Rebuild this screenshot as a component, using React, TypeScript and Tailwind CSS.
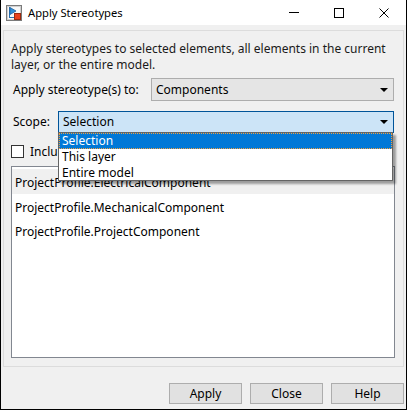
import React from "react";

const font = { fontFamily: '"Noto Sans", "Open Sans", sans-serif' };

function AppIcon() {
  return (
    <svg width="16" height="16" viewBox="0 0 16 16" className="block">
      <rect x="0.5" y="0.5" width="15" height="15" fill="#e8e8e8" stroke="#7a7a7a" />
      <rect x="1.5" y="1.5" width="13" height="13" fill="#f8f8f8" stroke="#d0d0d0" />
      <line x1="3.5" y1="2" x2="3.5" y2="13" stroke="#2a6fb0" />
      <polygon points="4,2.5 10,6 4,9.5" fill="#2f8fd8" stroke="#1e5f9e" strokeWidth="0.8" />
      <line x1="3.5" y1="12.5" x2="8" y2="12.5" stroke="#2a6fb0" />
      <rect x="8.5" y="8.5" width="6" height="6" fill="#e8401c" stroke="#9a2a10" />
    </svg>
  );
}

function Arrow() {
  return (
    <svg width="8" height="4" viewBox="0 0 8 4" className="block">
      <polygon points="0,0 8,0 4,4" fill="#000" />
    </svg>
  );
}

export default function App() {
  return (
    <div
      className="relative w-[407px] h-[410px] bg-[#f0f0f0] border-l border-r border-b border-black flex flex-col text-[12px] text-black overflow-hidden"
      style={font}
    >
      {/* Title bar */}
      <div className="h-[25px] bg-white flex items-center shrink-0">
        <div className="ml-[5px]">
          <AppIcon />
        </div>
        <div className="ml-[6px] text-[11.2px] leading-none">Apply Stereotypes</div>
        <div className="flex-1" />
        <div className="w-[45px] h-[25px] flex items-center justify-center">
          <div className="w-[10px] h-px bg-black" />
        </div>
        <div className="w-[45px] h-[25px] flex items-center justify-center">
          <div className="w-[10px] h-[10px] border border-black" />
        </div>
        <div className="w-[45px] h-[25px] flex items-center justify-center">
          <svg width="10" height="10" viewBox="0 0 10 10">
            <line x1="0.5" y1="0.5" x2="9.5" y2="9.5" stroke="#000" strokeWidth="1" />
            <line x1="9.5" y1="0.5" x2="0.5" y2="9.5" stroke="#000" strokeWidth="1" />
          </svg>
        </div>
      </div>

      {/* Panel */}
      <div className="mt-[5px] ml-[2px] mr-[2px] h-[337px] border border-[#dcdcdc] flex flex-col pl-[7px] pr-[7px] pt-[10px] shrink-0">
        <div className="leading-[16px] text-[#1a1a1a]">
          Apply stereotypes to selected elements, all elements in the current
          <br />
          layer, or the entire model.
        </div>

        <div className="mt-[5px] flex items-center h-[23px]">
          <div className="pl-[2px] w-[140px] shrink-0">Apply stereotype(s) to:</div>
          <div className="flex-1 h-[23px] bg-[#e5e5e5] border border-[#adadad] flex items-center pl-[4px] pr-[5px] mr-[2px]">
            <div className="flex-1">Components</div>
            <Arrow />
          </div>
        </div>

        <div className="mt-[10px] flex items-center h-[22px]">
          <div className="pl-[2px] w-[47px] shrink-0">Scope:</div>
          <div className="flex-1 h-[22px] bg-[#cce4f7] border border-[#005499] flex items-center pl-[4px] pr-[5px] mr-[2px]">
            <div className="flex-1">Selection</div>
            <Arrow />
          </div>
        </div>

        <div className="mt-[12px] flex items-center h-[13px]">
          <div className="w-[13px] h-[13px] border border-[#333] bg-white" />
          <div className="ml-[6px]">Include referenced models</div>
        </div>

        <div className="mt-[8px] h-[192px] mr-[1px] border border-[#828790] bg-white flex flex-col pt-[2px]">
          <div className="h-[25px] bg-[#f0f0f0] flex items-center pl-[3px] pt-[3px]">ProjectProfile.ElectricalComponent</div>
          <div className="h-[24px] flex items-center pl-[3px] pt-[3px]">ProjectProfile.MechanicalComponent</div>
          <div className="h-[24px] flex items-center pl-[3px] pt-[3px]">ProjectProfile.ProjectComponent</div>
        </div>
      </div>

      {/* Buttons */}
      <div className="mt-[16px] flex justify-end gap-[8px] pr-[2px]">
        <div className="w-[73px] h-[21px] bg-[#e1e1e1] border border-[#adadad] flex items-center justify-center">Apply</div>
        <div className="w-[73px] h-[21px] bg-[#e1e1e1] border border-[#adadad] flex items-center justify-center">Close</div>
        <div className="w-[73px] h-[21px] bg-[#e1e1e1] border border-[#adadad] flex items-center justify-center">Help</div>
      </div>

      {/* Dropdown list overlay */}
      <div className="absolute left-[57px] top-[132px] w-[335px] h-[49px] bg-white border border-[#646464] shadow-[3px_3px_2px_rgba(0,0,0,0.35)] flex flex-col">
        <div className="h-[16px] bg-[#0078d7] text-white flex items-center pl-[3px] outline-1 outline-dotted outline-[#f0a040] -outline-offset-1">
          Selection
        </div>
        <div className="h-[16px] flex items-center pl-[3px]">This layer</div>
        <div className="h-[16px] flex items-center pl-[3px]">Entire model</div>
      </div>
    </div>
  );
}
